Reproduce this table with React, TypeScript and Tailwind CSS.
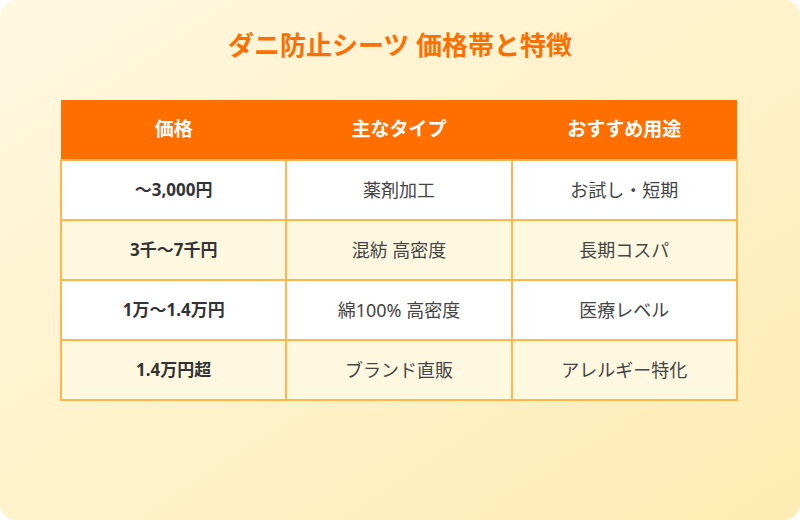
const rows = [
  ["〜3,000円", "薬剤加工", "お試し・短期"],
  ["3千〜7千円", "混紡 高密度", "長期コスパ"],
  ["1万〜1.4万円", "綿100% 高密度", "医療レベル"],
  ["1.4万円超", "ブランド直販", "アレルギー特化"],
]

const App = () => {
  return (
    <div className="w-[800px] h-[520px] bg-white" style={{ fontFamily: '"Noto Sans", "Noto Sans CJK JP", sans-serif' }}>
      <div className="w-full h-full rounded-2xl bg-gradient-to-br from-[#fff8e1] to-[#ffecb3] px-[60px] pt-[26px]">
        <h1 className="text-center text-[26px] font-bold text-[#ff6f00] leading-[38px]">ダニ防止シーツ 価格帯と特徴</h1>
        <table className="table-fixed w-[678px] mt-[36px] border-collapse">
          <thead>
            <tr className="bg-[#ff6f00] text-white h-[60px]">
              <th className="text-[19px] font-bold">価格</th>
              <th className="text-[19px] font-bold">主なタイプ</th>
              <th className="text-[19px] font-bold">おすすめ用途</th>
            </tr>
          </thead>
          <tbody>
            {rows.map((r, i) => (
              <tr key={i} className={(i % 2 === 0 ? "bg-white" : "bg-[#fff8e1]") + " h-[60px]"}>
                <td className="border-2 border-[#ffb74d] text-center text-[17px] font-bold text-[#333]">{r[0]}</td>
                <td className="border-2 border-[#ffb74d] text-center text-[18px] text-[#444]">{r[1]}</td>
                <td className="border-2 border-[#ffb74d] text-center text-[18px] text-[#444]">{r[2]}</td>
              </tr>
            ))}
          </tbody>
        </table>
      </div>
    </div>
  )
}

export default App
